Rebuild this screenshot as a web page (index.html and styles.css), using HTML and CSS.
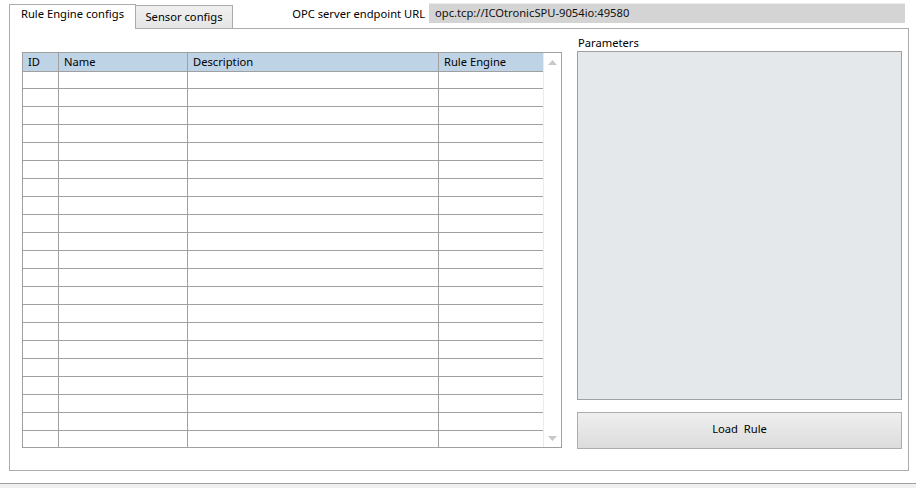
FILE: index.html
```html
<!DOCTYPE html>
<html>
<head>
<meta charset="utf-8">
<link rel="stylesheet" href="styles.css">
</head>
<body>
<div class="window">
  <div class="topbar">
    <div class="tabs">
      <div class="tab tab-active">Rule Engine configs</div>
      <div class="tab tab-inactive">Sensor configs</div>
    </div>
    <div class="url-label">OPC server endpoint URL</div>
    <div class="url-box">opc.tcp://ICOtronicSPU-9054io:49580</div>
  </div>
  <div class="panel">
    <div class="grid">
      <div class="grid-body">
        <div class="cell head">ID</div>
        <div class="cell head">Name</div>
        <div class="cell head">Description</div>
        <div class="cell head last">Rule Engine</div>
        <div class="cell"></div><div class="cell"></div><div class="cell"></div><div class="cell last"></div>
        <div class="cell"></div><div class="cell"></div><div class="cell"></div><div class="cell last"></div>
        <div class="cell"></div><div class="cell"></div><div class="cell"></div><div class="cell last"></div>
        <div class="cell"></div><div class="cell"></div><div class="cell"></div><div class="cell last"></div>
        <div class="cell"></div><div class="cell"></div><div class="cell"></div><div class="cell last"></div>
        <div class="cell"></div><div class="cell"></div><div class="cell"></div><div class="cell last"></div>
        <div class="cell"></div><div class="cell"></div><div class="cell"></div><div class="cell last"></div>
        <div class="cell"></div><div class="cell"></div><div class="cell"></div><div class="cell last"></div>
        <div class="cell"></div><div class="cell"></div><div class="cell"></div><div class="cell last"></div>
        <div class="cell"></div><div class="cell"></div><div class="cell"></div><div class="cell last"></div>
        <div class="cell"></div><div class="cell"></div><div class="cell"></div><div class="cell last"></div>
        <div class="cell"></div><div class="cell"></div><div class="cell"></div><div class="cell last"></div>
        <div class="cell"></div><div class="cell"></div><div class="cell"></div><div class="cell last"></div>
        <div class="cell"></div><div class="cell"></div><div class="cell"></div><div class="cell last"></div>
        <div class="cell"></div><div class="cell"></div><div class="cell"></div><div class="cell last"></div>
        <div class="cell"></div><div class="cell"></div><div class="cell"></div><div class="cell last"></div>
        <div class="cell"></div><div class="cell"></div><div class="cell"></div><div class="cell last"></div>
        <div class="cell"></div><div class="cell"></div><div class="cell"></div><div class="cell last"></div>
        <div class="cell"></div><div class="cell"></div><div class="cell"></div><div class="cell last"></div>
        <div class="cell"></div><div class="cell"></div><div class="cell"></div><div class="cell last"></div>
        <div class="cell"></div><div class="cell"></div><div class="cell"></div><div class="cell last"></div>
      </div>
      <div class="scrollbar">
        <svg class="arrow" width="9" height="5" viewBox="0 0 9 5"><path d="M0 5 L4.5 0 L9 5 Z" fill="#c8c8c8"/></svg>
        <svg class="arrow" width="9" height="5" viewBox="0 0 9 5"><path d="M0 0 L4.5 5 L9 0 Z" fill="#c8c8c8"/></svg>
      </div>
    </div>
    <div class="side">
      <div class="side-label">Parameters</div>
      <div class="params-box"></div>
      <div class="load-btn">Load  Rule</div>
    </div>
  </div>
  <div class="statusline"></div>
</div>
</body>
</html>
```

FILE: styles.css
```css
html, body {
  margin: 0;
  padding: 0;
  background: #ffffff;
}
body {
  font-family: "Noto Sans", "Open Sans", sans-serif;
  font-size: 11.2px;
  color: #000000;
}
.window {
  width: 916px;
  height: 488px;
  overflow: hidden;
  display: flex;
  flex-direction: column;
}
.topbar {
  height: 28px;
  display: flex;
  align-items: flex-end;
  padding-left: 9px;
  padding-right: 11px;
}
.tabs {
  display: flex;
  align-items: flex-end;
  height: 24px;
}
.tab {
  box-sizing: border-box;
  border: 1px solid #acacac;
  border-bottom: none;
  display: flex;
  align-items: center;
  justify-content: center;
}
.tab-active {
  width: 127px;
  height: 25px;
  background: #ffffff;
  position: relative;
  z-index: 2;
  margin-bottom: -1px;
  padding-bottom: 7px;
}
.tab-inactive {
  width: 98px;
  height: 23px;
  margin-left: -1px;
  background: linear-gradient(#f0f0f0, #e5e5e5);
  padding-bottom: 1px;
}
.url-label {
  margin-left: auto;
  align-self: flex-start;
  margin-top: 5px;
  height: 18px;
  line-height: 18px;
}
.url-box {
  align-self: flex-start;
  margin-top: 3px;
  margin-left: 4px;
  width: 476px;
  height: 20px;
  box-sizing: border-box;
  background: #d4d4d4;
  border-top: 1px solid #ececec;
  padding-left: 6px;
  line-height: 18px;
  color: #111;
}
.panel {
  margin-left: 9px;
  width: 900px;
  height: 444px;
  box-sizing: border-box;
  border: 1px solid #acacac;
  display: flex;
  align-items: flex-start;
  padding: 8px 6px 0 12px;
}
.grid {
  margin-top: 15px;
  width: 540px;
  height: 396px;
  box-sizing: border-box;
  border: 1px solid #a0a0a0;
  display: flex;
  overflow: hidden;
}
.grid-body {
  width: 520px;
  height: 394px;
  overflow: hidden;
  display: grid;
  grid-template-columns: 36px 129px 251px 104px;
  grid-auto-rows: 18px;
  align-content: start;
}
.cell {
  box-sizing: border-box;
  border-right: 1px solid #a0a0a0;
  border-bottom: 1px solid #a0a0a0;
}
.cell.last {
  border-right: none;
}
.head {
  height: 19px;
  background: #bfd3e7;
  padding-left: 5px;
  line-height: 17px;
}
.scrollbar {
  width: 18px;
  height: 394px;
  box-sizing: border-box;
  border-left: 1px solid #ebebeb;
  display: flex;
  flex-direction: column;
  justify-content: space-between;
  align-items: center;
  padding: 7px 0 6px 0;
}
.arrow {
  display: block;
}
.side {
  margin-left: 15px;
  width: 325px;
  display: flex;
  flex-direction: column;
}
.side-label {
  height: 14px;
  line-height: 12px;
  padding-left: 1px;
}
.params-box {
  height: 349px;
  box-sizing: border-box;
  border: 1px solid #a0a0a0;
  background: #e5e8eb;
}
.load-btn {
  margin-top: 12px;
  height: 37px;
  box-sizing: border-box;
  border: 1px solid #adadad;
  background: linear-gradient(#efefef, #dcdcdc);
  display: flex;
  align-items: center;
  justify-content: center;
  white-space: pre;
  padding-bottom: 3px;
}
.statusline {
  margin-top: 12px;
  height: 4px;
  border-top: 1px solid #a0a0a0;
  background: #f0f0f0;
}
```
